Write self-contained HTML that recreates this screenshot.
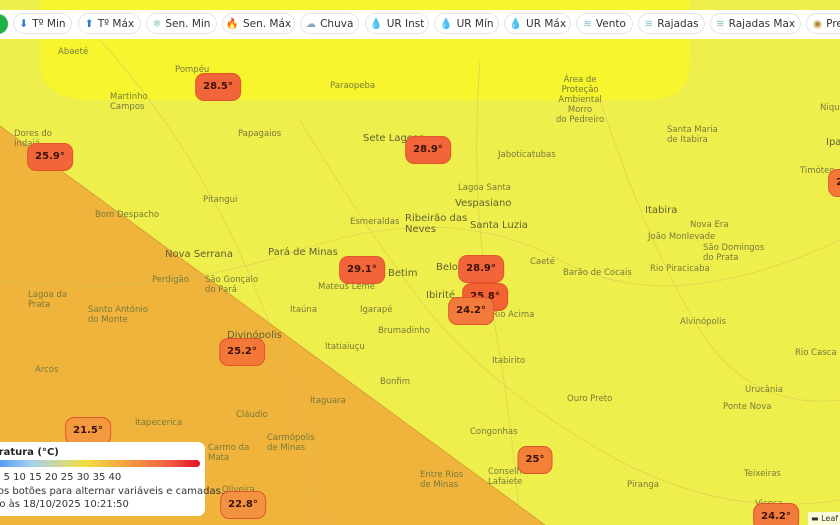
<!DOCTYPE html>
<html style="overflow:hidden"><head><meta charset="utf-8"><style>
html,body{margin:0;width:840px;height:525px;overflow:hidden}
body{position:relative;background:#eeef4c;font-family:"DejaVu Sans","Liberation Sans",sans-serif}
.lbl{position:absolute;font-size:8.5px;color:#777a3a;white-space:nowrap}
.lbl.b{font-size:10px;color:#5f6230}
.m{position:absolute;height:26px;line-height:26px;padding:0 7px;border-radius:9px;background:#f2653a;border:1.5px solid #e0552c;font-size:10px;font-weight:bold;color:#3a1408;transform:translate(-50%,-50%);white-space:nowrap}
.bar{position:absolute;top:10px;left:0;width:840px;height:29px;background:#fff}
.p{position:absolute;top:3px;height:21px;border:1px solid #e4e4e4;border-radius:12px;display:flex;align-items:center;justify-content:center;font-size:10.5px;color:#333;white-space:nowrap;gap:4px;box-sizing:border-box}
</style></head><body>
<svg width="840" height="525" style="position:absolute;left:0;top:0">
<path d="M40,0 H690 V60 Q690,100 650,100 H90 Q40,100 40,60 Z" fill="#f6f52e"/>
<polygon points="0,126 545,525 0,525" fill="#f0b33c"/>
<line x1="0" y1="126" x2="545" y2="525" stroke="#d9a030" stroke-width="1"/>
<g stroke="#d4c85a" stroke-width="0.8" fill="none" opacity="0.7">
<path d="M0,280 Q150,300 300,250 T560,260 T840,240"/>
<path d="M480,60 Q470,200 490,300 T520,525"/>
<path d="M300,120 Q360,220 420,300 T600,450 T840,500"/>
<path d="M100,40 Q200,150 260,300 T320,525"/>
<path d="M600,100 Q650,250 700,330 T840,400"/>
</g>
</svg>
<div class="lbl" style="left:58px;top:47px">Abaeté</div>
<div class="lbl" style="left:175px;top:65px">Pompéu</div>
<div class="lbl" style="left:110px;top:92px">Martinho<br>Campos</div>
<div class="lbl" style="left:330px;top:81px">Paraopeba</div>
<div class="lbl" style="left:556px;top:75px;text-align:center;line-height:10px">Área de<br>Proteção<br>Ambiental<br>Morro<br>do Pedreiro</div>
<div class="lbl" style="left:14px;top:129px">Dores do<br>Indaiá</div>
<div class="lbl" style="left:238px;top:129px">Papagaios</div>
<div class="lbl b" style="left:363px;top:133px">Sete Lagoas</div>
<div class="lbl" style="left:498px;top:150px">Jaboticatubas</div>
<div class="lbl" style="left:667px;top:125px">Santa Maria<br>de Itabira</div>
<div class="lbl" style="left:458px;top:183px">Lagoa Santa</div>
<div class="lbl b" style="left:455px;top:198px">Vespasiano</div>
<div class="lbl b" style="left:405px;top:213px">Ribeirão das<br>Neves</div>
<div class="lbl b" style="left:470px;top:220px">Santa Luzia</div>
<div class="lbl" style="left:350px;top:217px">Esmeraldas</div>
<div class="lbl b" style="left:645px;top:205px">Itabira</div>
<div class="lbl" style="left:95px;top:210px">Bom Despacho</div>
<div class="lbl" style="left:203px;top:195px">Pitangui</div>
<div class="lbl" style="left:690px;top:220px">Nova Era</div>
<div class="lbl" style="left:648px;top:232px">João Monlevade</div>
<div class="lbl" style="left:703px;top:243px">São Domingos<br>do Prata</div>
<div class="lbl b" style="left:165px;top:249px">Nova Serrana</div>
<div class="lbl b" style="left:268px;top:247px">Pará de Minas</div>
<div class="lbl b" style="left:388px;top:268px">Betim</div>
<div class="lbl b" style="left:436px;top:262px">Belo H</div>
<div class="lbl" style="left:530px;top:257px">Caeté</div>
<div class="lbl" style="left:563px;top:268px">Barão de Cocais</div>
<div class="lbl" style="left:650px;top:264px">Rio Piracicaba</div>
<div class="lbl" style="left:152px;top:275px">Perdigão</div>
<div class="lbl" style="left:205px;top:275px">São Gonçalo<br>do Pará</div>
<div class="lbl" style="left:318px;top:282px">Mateus Leme</div>
<div class="lbl b" style="left:426px;top:290px">Ibirité</div>
<div class="lbl" style="left:28px;top:290px">Lagoa da<br>Prata</div>
<div class="lbl" style="left:88px;top:305px">Santo Antônio<br>do Monte</div>
<div class="lbl" style="left:290px;top:305px">Itaúna</div>
<div class="lbl" style="left:360px;top:305px">Igarapé</div>
<div class="lbl" style="left:492px;top:310px">Rio Acima</div>
<div class="lbl" style="left:680px;top:317px">Alvinópolis</div>
<div class="lbl b" style="left:227px;top:330px">Divinópolis</div>
<div class="lbl" style="left:378px;top:326px">Brumadinho</div>
<div class="lbl" style="left:325px;top:342px">Itatiaiuçu</div>
<div class="lbl" style="left:492px;top:356px">Itabirito</div>
<div class="lbl" style="left:795px;top:348px">Rio Casca</div>
<div class="lbl" style="left:35px;top:365px">Arcos</div>
<div class="lbl" style="left:380px;top:377px">Bonfim</div>
<div class="lbl" style="left:745px;top:385px">Urucânia</div>
<div class="lbl" style="left:567px;top:394px">Ouro Preto</div>
<div class="lbl" style="left:310px;top:396px">Itaguara</div>
<div class="lbl" style="left:236px;top:410px">Cláudio</div>
<div class="lbl" style="left:135px;top:418px">Itapecerica</div>
<div class="lbl" style="left:723px;top:402px">Ponte Nova</div>
<div class="lbl" style="left:470px;top:427px">Congonhas</div>
<div class="lbl" style="left:267px;top:433px">Carmópolis<br>de Minas</div>
<div class="lbl" style="left:208px;top:443px">Carmo da<br>Mata</div>
<div class="lbl" style="left:488px;top:467px">Conselheiro<br>Lafaiete</div>
<div class="lbl" style="left:420px;top:470px">Entre Rios<br>de Minas</div>
<div class="lbl" style="left:744px;top:469px">Teixeiras</div>
<div class="lbl" style="left:627px;top:480px">Piranga</div>
<div class="lbl" style="left:222px;top:485px">Oliveira</div>
<div class="lbl" style="left:755px;top:499px">Viçosa</div>
<div class="lbl b" style="left:826px;top:137px">Ipa</div>
<div class="lbl" style="left:800px;top:166px">Timóteo</div>
<div class="lbl" style="left:820px;top:103px">Nique</div>

<div class="m" style="left:218px;top:87px">28.5°</div>
<div class="m" style="left:50px;top:157px">25.9°</div>
<div class="m" style="left:428px;top:150px">28.9°</div>
<div class="m" style="left:362px;top:270px">29.1°</div>
<div class="m" style="left:485px;top:297px;background:#f26233">25.8°</div>
<div class="m" style="left:481px;top:269px">28.9°</div>
<div class="m" style="left:471px;top:311px;background:#f27a3c">24.2°</div>
<div class="m" style="left:242px;top:352px;background:#f37838">25.2°</div>
<div class="m" style="left:88px;top:431px;background:#f39a40">21.5°</div>
<div class="m" style="left:535px;top:460px;background:#f48038">25°</div>
<div class="m" style="left:243px;top:505px;background:#f39240">22.8°</div>
<div class="m" style="left:776px;top:517px;background:#f27a3c">24.2°</div>
<div class="m" style="left:845px;top:183px;background:#f37838">25.</div>

<div class="bar">
<div style="position:absolute;left:-12px;top:4px;width:20px;height:20px;border-radius:10px;background:#22b04a"></div>
<div class="p" style="left:13px;width:59px"><span style="color:#2a7bd6">⬇</span>Tº Min</div>
<div class="p" style="left:78px;width:63px"><span style="color:#2a7bd6">⬆</span>Tº Máx</div>
<div class="p" style="left:146px;width:71px"><span style="color:#9cc">❄</span>Sen. Min</div>
<div class="p" style="left:222px;width:73px"><span style="color:#e5551c">🔥</span>Sen. Máx</div>
<div class="p" style="left:300px;width:59px"><span style="color:#8ab">☁</span>Chuva</div>
<div class="p" style="left:365px;width:64px"><span style="color:#2a8ad6">💧</span>UR Inst</div>
<div class="p" style="left:434px;width:65px"><span style="color:#2a8ad6">💧</span>UR Mín</div>
<div class="p" style="left:504px;width:67px"><span style="color:#2a8ad6">💧</span>UR Máx</div>
<div class="p" style="left:576px;width:57px"><span style="color:#8bc">≋</span>Vento</div>
<div class="p" style="left:638px;width:67px"><span style="color:#8bc">≋</span>Rajadas</div>
<div class="p" style="left:710px;width:91px"><span style="color:#8bc">≋</span>Rajadas Max</div>
<div class="p" style="left:806px;width:70px;justify-content:flex-start;padding-left:6px"><span style="color:#b8862c">◉</span>Pressão</div>
</div>

<div style="position:absolute;left:-10px;top:442px;width:215px;height:74px;background:#fff;border-radius:7px;font-size:10px;color:#333">
<div style="position:absolute;left:-28px;top:5px;font-weight:bold;font-size:10px;color:#222;white-space:nowrap">Temperatura (°C)</div>
<div style="position:absolute;left:0;top:18px;width:210px;height:7px;border-radius:4px;background:linear-gradient(90deg,#3a8ef0,#a8d0f0 20%,#f0e040 45%,#f5a040 65%,#f06040 85%,#e0102a)"></div>
<div style="position:absolute;left:4px;top:30px;white-space:nowrap">0 5 10 15 20 25 30 35 40</div>
<div style="position:absolute;left:-33px;top:44px;white-space:nowrap">Clique nos botões para alternar variáveis e camadas.</div>
<div style="position:absolute;left:-37px;top:57px;white-space:nowrap">Atualizado às 18/10/2025 10:21:50</div>
</div>
<div style="position:absolute;left:808px;top:512px;width:40px;height:14px;background:rgba(255,255,255,.8);font-size:8px;color:#333;padding-left:3px;line-height:13px">▬ Leaf</div>
</body></html>
